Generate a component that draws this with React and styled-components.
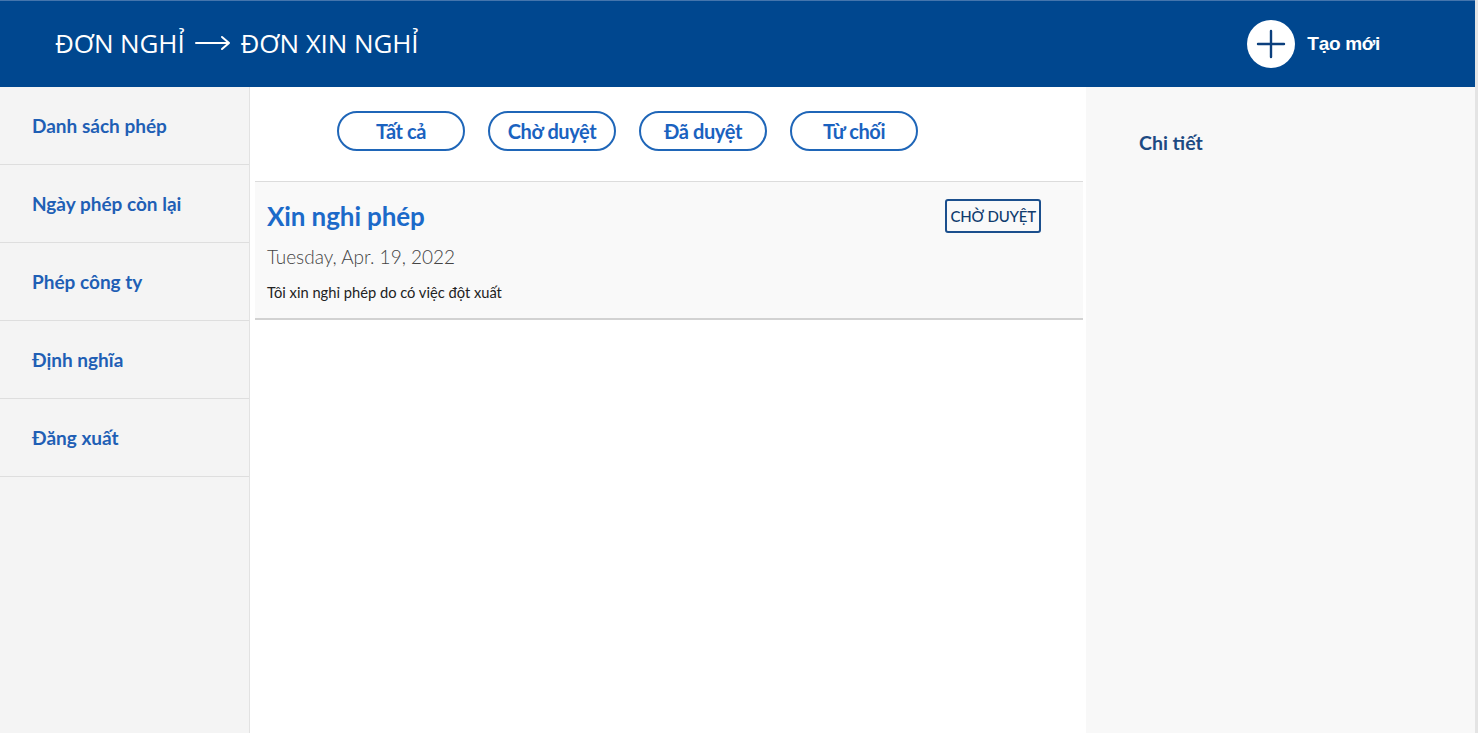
import React from "react";
import styled, { createGlobalStyle } from "styled-components";

const Global = createGlobalStyle`
  html, body { margin: 0; padding: 0; height: 100%; }
  body { font-family: Lato, "Noto Sans", sans-serif; background: #e4e4e4; }
  #root { height: 100%; }
  * { box-sizing: border-box; }
`;

const Page = styled.div`
  width: 1475px;
  height: 733px;
  display: flex;
  flex-direction: column;
  background: #fff;
  overflow: hidden;
`;

const Header = styled.header`
  height: 87px;
  flex: none;
  background: #00478f;
  border-top: 1px solid #4475ad;
  display: flex;
  align-items: center;
  justify-content: space-between;
  padding: 0 95px 0 55px;
`;

const Title = styled.h1`
  margin: 0;
  font-family: "Open Sans", "Noto Sans", sans-serif;
  font-weight: 400;
  font-size: 26px;
  color: #fff;
  letter-spacing: -0.1px;
  display: flex;
  align-items: center;
  gap: 10px;
  margin-top: -2px;
`;

const CreateButton = styled.button`
  display: flex;
  align-items: center;
  gap: 12px;
  background: none;
  border: none;
  padding: 0;
  color: #fff;
  font-family: "Liberation Sans", Arial, sans-serif;
  font-weight: 700;
  font-size: 19px;
  letter-spacing: -0.3px;
  cursor: pointer;
`;

const PlusCircle = styled.span`
  width: 48px;
  height: 48px;
  border-radius: 50%;
  background: #fff;
  display: flex;
  align-items: center;
  justify-content: center;
`;

const Body = styled.div`
  flex: 1;
  display: flex;
  min-height: 0;
`;

const Sidebar = styled.nav`
  width: 250px;
  flex: none;
  background: #f4f4f4;
  border-right: 1px solid #e2e2e2;
`;

const NavItem = styled.a`
  display: flex;
  align-items: center;
  height: 78px;
  padding-left: 32px;
  border-bottom: 1px solid #dedede;
  color: #1f5fb5;
  font-weight: 700;
  font-size: 19px;
  text-decoration: none;
  cursor: pointer;
`;

const Main = styled.main`
  width: 836px;
  flex: none;
  padding: 0 3px 0 5px;
  background: #fff;
`;

const FilterBar = styled.div`
  height: 95px;
  display: flex;
  align-items: center;
  gap: 23px;
  padding-left: 82px;
  border-bottom: 1px solid #dcdcdc;
  padding-bottom: 6px;
`;

const FilterButton = styled.button`
  width: 128px;
  height: 40px;
  border-radius: 20px;
  border: 2px solid #1f66b8;
  background: #fff;
  color: #1a62c0;
  font-family: Lato, sans-serif;
  font-weight: 700;
  font-size: 20px;
  letter-spacing: -0.4px;
  padding: 0;
  cursor: pointer;
`;

const Card = styled.article`
  background: #f9f9f9;
  border-bottom: 2px solid #d2d2d2;
  padding: 16px 42px 16px 12px;
  display: flex;
  justify-content: space-between;
  align-items: flex-start;
`;

const CardText = styled.div`
  display: flex;
  flex-direction: column;
`;

const CardTitle = styled.h2`
  margin: 0;
  font-size: 26px;
  font-weight: 700;
  color: #1c6ac9;
  line-height: 36px;
  letter-spacing: -0.1px;
`;

const CardDate = styled.div`
  margin-top: 11px;
  font-size: 19px;
  font-weight: 300;
  color: #444;
  line-height: 24px;
`;

const CardDesc = styled.div`
  margin-top: 13px;
  font-size: 14.7px;
  color: #222;
  line-height: 20px;
`;

const Badge = styled.span`
  margin-top: 1px;
  border: 2px solid #1b4f8d;
  border-radius: 3px;
  height: 34px;
  padding: 0 3px;
  display: flex;
  align-items: center;
  font-size: 15px;
  font-weight: 500;
  color: #103c6e;
  letter-spacing: -0.2px;
`;

const Detail = styled.aside`
  flex: 1;
  background: #f8f8f8;
  padding: 44px 0 0 53px;
`;

const DetailTitle = styled.h3`
  margin: 0;
  font-size: 19.5px;
  font-weight: 700;
  color: #1d4a82;
`;

const navItems = ["Danh sách phép", "Ngày phép còn lại", "Phép công ty", "Định nghĩa", "Đăng xuất"];
const filters = ["Tất cả", "Chờ duyệt", "Đã duyệt", "Từ chối"];

export default function App() {
  return (
    <>
      <Global />
      <Page>
        <Header>
          <Title>
            <span>ĐƠN NGHỈ</span>
            <svg width="36" height="16" viewBox="0 0 36 16" fill="none" stroke="#fff" strokeWidth="2" strokeLinecap="round" strokeLinejoin="round">
              <path d="M1 8h33M27 2l7 6-7 6" />
            </svg>
            <span>ĐƠN XIN NGHỈ</span>
          </Title>
          <CreateButton>
            <PlusCircle>
              <svg width="30" height="30" viewBox="0 0 30 30" stroke="#0b3f7d" strokeWidth="2.4" strokeLinecap="round">
                <path d="M15 2v26M2 15h26" />
              </svg>
            </PlusCircle>
            Tạo mới
          </CreateButton>
        </Header>
        <Body>
          <Sidebar>
            {navItems.map((n) => (
              <NavItem key={n}>{n}</NavItem>
            ))}
          </Sidebar>
          <Main>
            <FilterBar>
              {filters.map((f) => (
                <FilterButton key={f}>{f}</FilterButton>
              ))}
            </FilterBar>
            <Card>
              <CardText>
                <CardTitle>Xin nghi phép</CardTitle>
                <CardDate>Tuesday, Apr. 19, 2022</CardDate>
                <CardDesc>Tôi xin nghỉ phép do có việc đột xuất</CardDesc>
              </CardText>
              <Badge>CHỜ DUYỆT</Badge>
            </Card>
          </Main>
          <Detail>
            <DetailTitle>Chi tiết</DetailTitle>
          </Detail>
        </Body>
      </Page>
    </>
  );
}
